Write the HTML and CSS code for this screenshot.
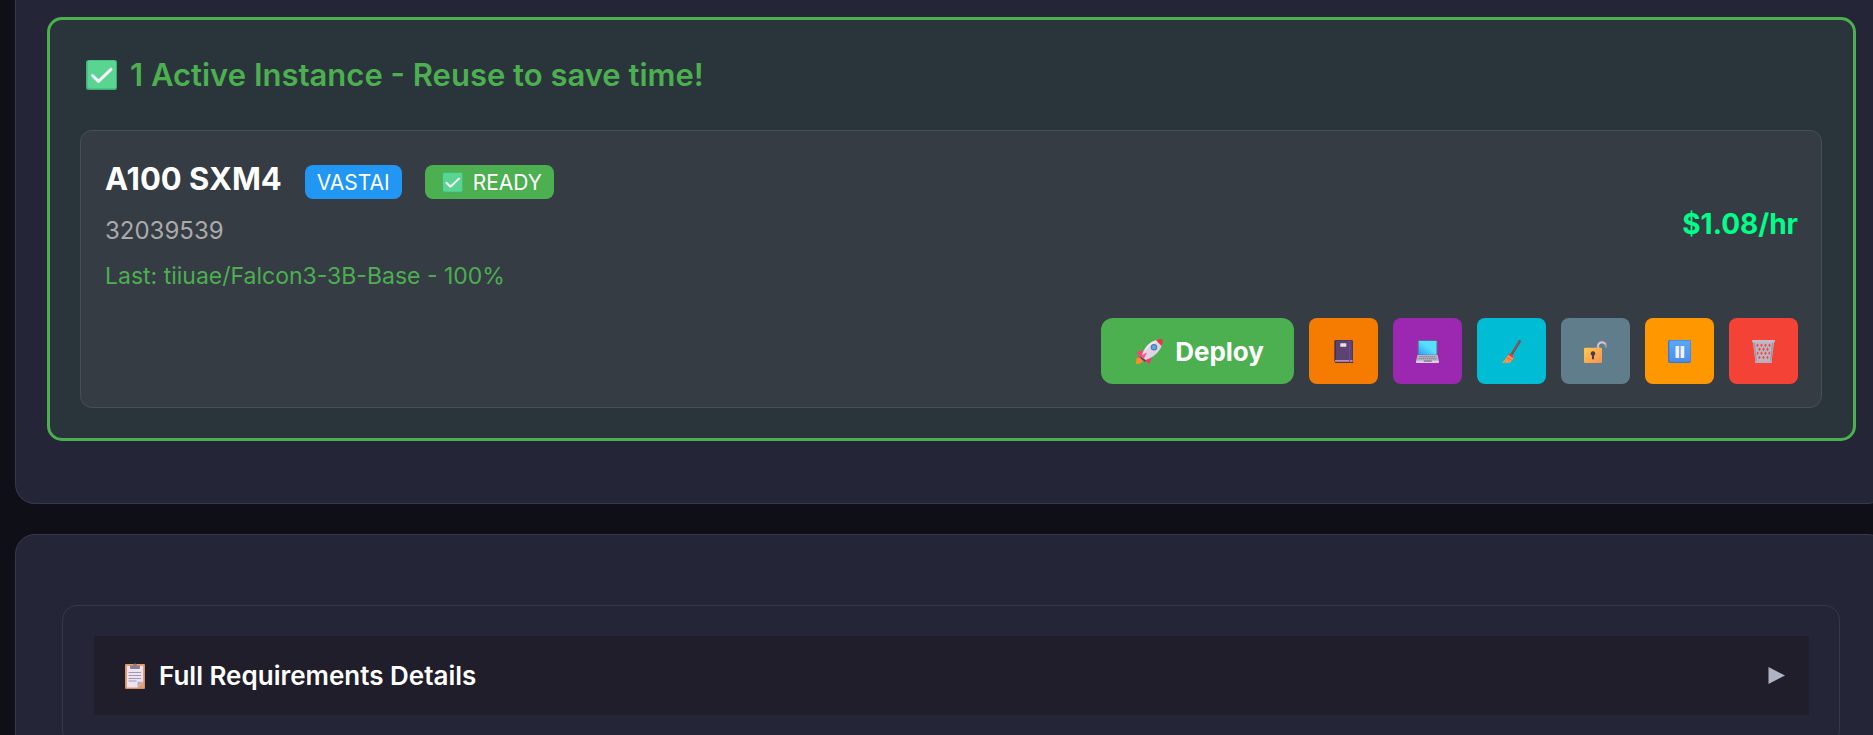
FILE: index.html
```html
<!DOCTYPE html>
<html lang="en">
<head>
  <meta charset="UTF-8" />
  <meta name="viewport" content="width=device-width, initial-scale=1.0" />
  <title>Active Instances</title>
  <link rel="stylesheet" href="styles.css">
</head>
<body>
  <!-- shared icon shapes -->
  <svg class="defs" aria-hidden="true">
    <defs>
      <linearGradient id="g-laptop" x1="0" y1="1" x2="1" y2="0">
        <stop offset="0" stop-color="#2c9df5" /><stop offset=".55" stop-color="#55e0ff" /><stop offset="1" stop-color="#55e0ff" />
      </linearGradient>
      <linearGradient id="g-lock" x1="0" y1="0" x2="1" y2="1">
        <stop offset="0" stop-color="#ffc94d" /><stop offset="1" stop-color="#f79252" />
      </linearGradient>
      <linearGradient id="g-pause" x1="0" y1="0" x2="0" y2="1">
        <stop offset="0" stop-color="#58a8fa" /><stop offset="1" stop-color="#4b90ec" />
      </linearGradient>
    </defs>
    <symbol id="i-check" viewBox="0 0 31 30">
      <rect width="31" height="30" rx="2.5" fill="#3eaf76" />
      <rect x="1.5" y="0.5" width="28.5" height="28" rx="2" fill="#5ad591" />
      <path d="M6.5 15.5l6 5.8L25 9.3" fill="none" stroke="#f6f2fb" stroke-width="3" stroke-linecap="round" stroke-linejoin="round" />
    </symbol>
  </svg>

  <section class="card instances">
    <div class="active-instances">
      <h2><svg class="check-lg" aria-hidden="true"><use href="#i-check" /></svg>1 Active Instance - Reuse to save time!</h2>

      <div class="instance">
        <div class="instance-top">
          <div class="instance-info">
            <div class="instance-name">
              <strong>A100 SXM4</strong>
              <span class="badge provider">VASTAI</span>
              <span class="badge ready"><svg class="check-sm" aria-hidden="true"><use href="#i-check" /></svg>READY</span>
            </div>
            <div class="instance-id">32039539</div>
            <div class="instance-last">Last: tiiuae/Falcon3-3B-Base - 100%</div>
          </div>
          <div class="price">$1.08/hr</div>
        </div>

        <div class="actions">
          <button type="button" class="btn deploy">
            <svg class="rocket" viewBox="0 0 27 25" aria-hidden="true">
              <path d="M1 18.5C3 18.5 6 20 6.8 22 6 24.5 3 25 0 25 0 22 0 20 1 18.5z" fill="#ff8a2b" />
              <path d="M7 11.5C3.5 11 1 13 0.5 15.5L3.5 15 1.5 18.5 6.5 18z" fill="#ff3f78" />
              <path d="M15.5 17C16 20.5 14.5 23.5 12 25L10.5 22 8.5 23.5 7.5 20z" fill="#f5356f" />
              <path d="M5.5 18C7 9 14 2 21 1L26 5.5C24.5 12 18 18.5 9 21z" fill="#ded5e2" />
              <path d="M9 10.5C12 5 16.5 2 21 1L22.5 2.5C17 4 12 8 8.5 14z" fill="#efe6ef" />
              <path d="M20 1.2C22.5 0 25 0 26.5 0.3 27 2.5 26.5 5 25.5 7z" fill="#ee3348" />
              <path d="M5 17.5L10 21.5 8.5 22.5 4.5 19z" fill="#4a4566" />
              <path d="M4.5 17L11 13.5 8 19.5z" fill="#ff4f86" />
              <circle cx="18" cy="8.3" r="3.2" fill="#54729e" />
              <circle cx="18" cy="8.3" r="2.2" fill="#55a8f8" />
            </svg>
            Deploy
          </button>
          <button type="button" class="btn icon logs" aria-label="Logs">
            <svg viewBox="0 0 23 23" aria-hidden="true">
              <rect x="2.3" y="0" width="18.7" height="22" rx="1.5" fill="#45324f" />
              <rect x="4" y="0.6" width="16.4" height="20" rx="1" fill="#5c4370" />
              <path d="M3 20.3h17.5v1.5H3z" fill="#dcb9dc" />
              <path d="M3 21.7h18.2V23H3z" fill="#493557" />
              <path d="M17.7 0.6v22" stroke="#6e48a8" stroke-width="1" />
              <rect x="8.3" y="3.3" width="6" height="3.5" rx="0.5" fill="#ecdfe9" />
            </svg>
          </button>
          <button type="button" class="btn icon terminal" aria-label="Terminal">
            <svg viewBox="0 0 23 23" aria-hidden="true">
              <rect x="1.6" y="0" width="20" height="16" rx="1.3" fill="#6e6682" />
              <rect x="2.7" y="1" width="17.8" height="13.7" fill="url(#g-laptop)" />
              <path d="M1.5 15h20.2L23 21.5H0z" fill="#b9b3c6" />
              <rect y="20.7" width="23" height="2.3" rx="0.8" fill="#d8d2e0" />
              <path d="M3 16.7h17M2.5 18.7h18" stroke="#817992" stroke-width="1.1" stroke-dasharray="1.5 0.6" />
              <path d="M8 20h7.5l0.5 2H7.5z" fill="#948da3" />
            </svg>
          </button>
          <button type="button" class="btn icon clean" aria-label="Clean up">
            <svg viewBox="0 0 23 23" aria-hidden="true">
              <path d="M19.7 1.3L11.5 14.3" stroke="#7b4a4a" stroke-width="2.5" stroke-linecap="round" />
              <path d="M19.2 1.7L11.2 14" stroke="#a86458" stroke-width="0.7" />
              <path d="M9.3 13.5L13.7 16.5C13.5 19.5 11.5 22 9 23L1.8 22.7C5 20.5 6.5 16.5 9.3 13.5z" fill="#ff964e" />
              <path d="M9.5 13.3l4.2 3-0.7 1.8-5-3.3z" fill="#e8403f" />
              <path d="M7 17.5l5 3" stroke="#e8573d" stroke-width="0.9" />
              <path d="M7.5 18.5L4.5 22.5M10 19.5l-2.5 3.2" stroke="#e77339" stroke-width="0.7" />
            </svg>
          </button>
          <button type="button" class="btn icon unlock" aria-label="Unlock">
            <svg viewBox="0 0 23 23" aria-hidden="true">
              <path d="M14 8.5V6a4 4 0 0 1 8 0v1.5" fill="none" stroke="#9e94ac" stroke-width="2.6" />
              <path d="M14 8V6a4 4 0 0 1 7.5-1.5" fill="none" stroke="#d3cadb" stroke-width="1.5" />
              <rect x="0" y="7.7" width="18" height="15.3" rx="1.3" fill="url(#g-lock)" />
              <circle cx="9" cy="13.5" r="2.3" fill="#4d3858" />
              <path d="M8 14h2v4.5a1 1 0 0 1-2 0z" fill="#4d3858" />
            </svg>
          </button>
          <button type="button" class="btn icon pause" aria-label="Pause">
            <svg viewBox="0 0 23 23" aria-hidden="true">
              <rect width="23" height="23" rx="2" fill="#3b78d2" />
              <rect x="1.3" y="0.5" width="21.2" height="21.3" rx="1.5" fill="url(#g-pause)" />
              <rect x="7.5" y="6" width="3.7" height="12" rx="0.6" fill="#f2effb" />
              <rect x="12.6" y="6" width="3.7" height="12" rx="0.6" fill="#f2effb" />
            </svg>
          </button>
          <button type="button" class="btn icon destroy" aria-label="Destroy">
            <svg viewBox="0 0 23 23" aria-hidden="true">
              <!-- bin body with diamond holes in the mesh -->
              <path d="M0.8 1.5h21.4L19.5 22h-16z" fill="#beb5c4" />
              <path d="M1.5 2.5h1.5L5 21H3.7zM21.5 2.5H20L18 21h1.3z" fill="#9f95a8" />
              <g fill="#ec4a41">
                <path d="M5.5 3.5l1.3 1.8-1.3 1.8-1.3-1.8zM9.5 3.5l1.3 1.8-1.3 1.8-1.3-1.8zM13.5 3.5l1.3 1.8-1.3 1.8-1.3-1.8zM17.5 3.5l1.3 1.8-1.3 1.8-1.3-1.8z" />
                <path d="M7.5 7.3l1.3 2-1.3 2-1.3-2zM11.5 7.3l1.3 2-1.3 2-1.3-2zM15.5 7.3l1.3 2-1.3 2-1.3-2z" />
                <path d="M5.7 11.5l1.2 1.8-1.2 1.8-1-1.8zM9.5 11.5l1.3 1.8-1.3 1.8-1.3-1.8zM13.5 11.5l1.3 1.8-1.3 1.8-1.3-1.8zM17.3 11.5l1 1.8-1 1.8-1.2-1.8z" />
                <path d="M7.5 15.7l1.2 1.8-1.2 1.8-1.2-1.8zM11.5 15.7l1.3 1.8-1.3 1.8-1.3-1.8zM15.5 15.7l1.2 1.8-1.2 1.8-1.2-1.8z" />
              </g>
              <rect width="23" height="2.3" rx="1" fill="#c4bbca" />
              <rect x="3" y="20.8" width="17" height="2.2" rx="1" fill="#b7adbe" />
            </svg>
          </button>
        </div>
      </div>
    </div>
  </section>

  <section class="card requirements">
    <div class="panel">
      <button type="button" class="panel-header" aria-expanded="false">
        <svg class="clipboard" viewBox="0 0 20 26" aria-hidden="true">
          <rect y="1" width="20" height="25" rx="1" fill="#d88e60" />
          <rect x="0.7" y="1.2" width="18.5" height="23.5" fill="#e5a070" />
          <path d="M2 3h16v16l-5.5 5.5H2z" fill="#ece4f3" />
          <path d="M18 18.7h-5.5v5.5z" fill="#b8abc0" />
          <path d="M3.5 9.5h12.5M3.5 12.5h12.5M3.5 15.5h12.5M3.5 18h8" stroke="#9b90a6" stroke-width="0.9" />
          <path d="M5 2.5h3a2 2 0 0 1 4 0h3v2.5a1 1 0 0 1-1 1H6a1 1 0 0 1-1-1z" fill="#8b7d8d" />
        </svg>
        Full Requirements Details
        <svg class="arrow" viewBox="0 0 17 17" aria-hidden="true"><path d="M0.5 0L17 8.5 0.5 17z" fill="#b0b3c3" /></svg>
      </button>
    </div>
  </section>
</body>
</html>
```

FILE: styles.css
```css
* {
  box-sizing: border-box;
}
body {
  margin: 0;
  padding-left: 15px;
  height: 100vh;
  display: flex;
  flex-direction: column;
  gap: 30px;
  overflow: hidden;
  font-family: Inter, 'Liberation Sans', sans-serif;
  line-height: 1.6;
  background-color: #0f0f17;
  color: white;
}
svg {
  display: block;
  flex-shrink: 0;
}
.defs {
  position: absolute;
  width: 0;
  height: 0;
}
.card {
  width: 100vw;
  flex-shrink: 0;
  background-color: #242536;
  border: 1px solid #38384a;
  border-radius: 20px;
}
.instances {
  border-top: none;
  border-radius: 0 0 20px 20px;
  padding: 17px 31px 62px;
}
.active-instances {
  padding: 30px 31px 30px 30px;
  background-color: #2a343b;
  border: 3px solid #4caf50;
  border-radius: 15px;
}
.active-instances h2 {
  display: flex;
  align-items: center;
  gap: 13px;
  margin: 0 0 30px;
  padding-left: 6px;
  font-size: 31px;
  line-height: 50px;
  font-weight: 600;
  color: #4caf50;
}
.check-lg {
  width: 31px;
  height: 30px;
}
.check-sm {
  display: inline-block;
  width: 21px;
  height: 21px;
  margin-right: 10px;
  vertical-align: -3px;
}
.instance {
  padding: 23px 23px 23px 24px;
  background-color: #353c44;
  border: 1px solid #435056;
  border-radius: 12px;
}
.instance-top {
  display: flex;
  justify-content: space-between;
  align-items: center;
  margin-bottom: 23px;
}
.instance-info {
  display: flex;
  flex-direction: column;
  gap: 7px;
}
.instance-name {
  display: flex;
  align-items: baseline;
  gap: 23px;
  font-size: 31px;
  line-height: 50px;
}
.instance-name strong {
  font-weight: 700;
}
.badge {
  padding: 5px 12px 3px;
  border-radius: 8px;
  font-size: 21px;
  line-height: 26px;
}
.provider {
  background-color: #2196f3;
}
.ready {
  padding-left: 17px;
  background-color: #4caf50;
}
.instance-id {
  font-size: 24px;
  line-height: 40px;
  color: #aaaaaa;
}
.instance-last {
  font-size: 23px;
  line-height: 37px;
  color: #4caf50;
}
.price {
  font-size: 28px;
  font-weight: 700;
  color: #00ff88;
}
.actions {
  display: flex;
  justify-content: flex-end;
  gap: 15px;
}
.btn {
  display: flex;
  align-items: center;
  justify-content: center;
  height: 66px;
  padding: 0;
  border: none;
  border-radius: 8px;
  color: white;
  font-family: inherit;
  cursor: pointer;
}
.deploy {
  gap: 12px;
  padding: 0 30px 0 35px;
  border-radius: 12px;
  font-size: 26px;
  font-weight: 700;
  background-color: #4caf50;
}
.rocket {
  width: 27px;
  height: 25px;
}
.icon {
  width: 69px;
}
.icon svg {
  width: 23px;
  height: 23px;
}
.logs {
  background-color: #f57c00;
}
.terminal {
  background-color: #9c27b0;
}
.clean {
  background-color: #00bcd4;
}
.unlock {
  background-color: #607d8b;
}
.pause {
  background-color: #ff9800;
}
.destroy {
  background-color: #f44336;
}
.requirements {
  padding: 70px 47px 70px 46px;
}
.panel {
  padding: 30px 30px 30px 31px;
  border: 1px solid #38384a;
  border-radius: 15px;
}
.panel-header {
  display: flex;
  align-items: center;
  gap: 14px;
  width: 100%;
  height: 79px;
  padding: 0 24px 0 31px;
  border: none;
  background-color: #1f1e2a;
  color: white;
  font-family: inherit;
  font-size: 26px;
  font-weight: 600;
  cursor: pointer;
}
.clipboard {
  width: 20px;
  height: 26px;
}
.arrow {
  width: 17px;
  height: 17px;
  margin-left: auto;
}
```
